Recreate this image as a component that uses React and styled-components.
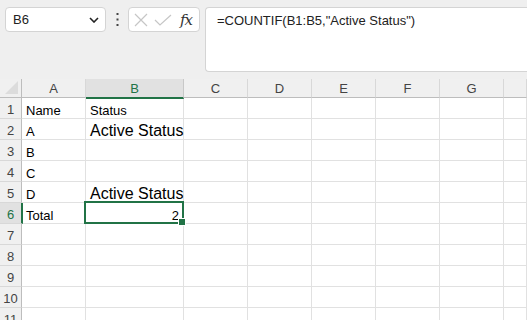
import React from "react";
import styled, { createGlobalStyle } from "styled-components";

const GREEN = "#217346";

const Global = createGlobalStyle`
  html, body { margin: 0; padding: 0; background: #efefef; }
  body { font-family: "Liberation Sans", Arial, sans-serif; }
`;

const Page = styled.div`
  width: 527px;
  height: 320px;
  overflow: hidden;
  background: #efefef;
  display: flex;
  flex-direction: column;
`;

const Toolbar = styled.div`
  display: flex;
  align-items: flex-start;
  padding: 7px 0 0 5px;
  height: 73px;
  box-sizing: border-box;
`;

const NameBox = styled.div`
  width: 101px;
  height: 25px;
  box-sizing: border-box;
  background: #fff;
  border: 1px solid #d4d4d4;
  border-radius: 4px;
  display: flex;
  align-items: center;
  justify-content: space-between;
  padding: 0 6px 0 7px;
  font-size: 13px;
  color: #222;
`;

const Dots = styled.div`
  width: 22px;
  height: 25px;
  display: flex;
  align-items: center;
  justify-content: center;
`;

const FxBox = styled.div`
  width: 72px;
  height: 25px;
  box-sizing: border-box;
  background: #fff;
  border: 1px solid #d4d4d4;
  border-radius: 4px;
  display: flex;
  align-items: center;
  padding: 0 4px 0 5px;
  gap: 6px;
`;

const Fx = styled.span`
  font-family: "DejaVu Serif", "Liberation Serif", serif;
  font-style: italic;
  font-size: 15px;
  color: #333;
  margin-left: 2px;
  letter-spacing: -1px;
`;

const FormulaBox = styled.div`
  flex: 1;
  margin-left: 5px;
  height: 65px;
  box-sizing: border-box;
  background: #fff;
  border: 1px solid #d4d4d4;
  border-right: none;
  border-radius: 4px 0 0 4px;
  padding: 5px 0 0 11px;
  font-size: 13px;
  color: #222;
`;

const Grid = styled.div`
  margin-top: 7px;
  display: grid;
  grid-template-columns: 22px 64px 98px 64px 64px 64px 64px 64px 23px;
  grid-template-rows: 19px repeat(11, 21px);
  background: #fff;
`;

const Corner = styled.div`
  background: #f0f0f0;
  border-right: 1px solid #bdbdbd;
  border-bottom: 1px solid #bdbdbd;
  position: relative;
  &::after {
    content: "";
    position: absolute;
    right: 3px;
    bottom: 3px;
    width: 0;
    height: 0;
    border-left: 13px solid transparent;
    border-bottom: 13px solid #dcdcdc;
  }
`;

const ColHead = styled.div`
  background: ${(p) => (p.$active ? "#e1e1e1" : "#f0f0f0")};
  color: ${(p) => (p.$active ? GREEN : "#444")};
  border-right: 1px solid ${(p) => (p.$active ? "#c8c8c8" : "#d8d8d8")};
  border-bottom: ${(p) => (p.$active ? `2px solid ${GREEN}` : "1px solid #bdbdbd")};
  margin-bottom: ${(p) => (p.$active ? "-1px" : "0")};
  font-size: 13px;
  display: flex;
  align-items: center;
  justify-content: center;
  padding-top: 1px;
  box-sizing: border-box;
  position: relative;
  z-index: 1;
`;

const RowHead = styled.div`
  background: ${(p) => (p.$active ? "#e1e1e1" : "#f0f0f0")};
  color: ${(p) => (p.$active ? GREEN : "#444")};
  border-right: ${(p) => (p.$active ? `2px solid ${GREEN}` : "1px solid #bdbdbd")};
  margin-right: ${(p) => (p.$active ? "-1px" : "0")};
  border-bottom: 1px solid #d8d8d8;
  font-size: 13px;
  display: flex;
  align-items: center;
  justify-content: center;
  padding-top: 2px;
  box-sizing: border-box;
  position: relative;
  z-index: 1;
`;

const Cell = styled.div`
  border-right: 1px solid #e1e1e1;
  border-bottom: 1px solid #e1e1e1;
  box-sizing: border-box;
  display: flex;
  align-items: flex-end;
  justify-content: ${(p) => (p.$right ? "flex-end" : "flex-start")};
  padding: 0 4px 0 4px;
  font-size: ${(p) => (p.$big ? "16px" : "13px")};
  line-height: ${(p) => (p.$big ? "17px" : "15px")};
  color: #000;
  white-space: nowrap;
  position: relative;
`;

const Selection = styled.div`
  position: absolute;
  left: -2px;
  top: -2px;
  right: -1px;
  bottom: -1px;
  border: 2px solid ${GREEN};
  z-index: 2;
  pointer-events: none;
`;

const Handle = styled.div`
  position: absolute;
  right: -4px;
  bottom: -4px;
  width: 6px;
  height: 6px;
  background: ${GREEN};
  border: 1px solid #fff;
  z-index: 3;
`;

const cols = ["A", "B", "C", "D", "E", "F", "G", "H"];
const data = {
  1: { A: "Name", B: "Status" },
  2: { A: "A", B: "Active Status", bigB: true },
  3: { A: "B" },
  4: { A: "C" },
  5: { A: "D", B: "Active Status", bigB: true },
  6: { A: "Total", B: "2", rightB: true },
};

export default function App() {
  const rows = Array.from({ length: 11 }, (_, i) => i + 1);
  return (
    <Page>
      <Global />
      <Toolbar>
        <NameBox>
          <span>B6</span>
          <svg width="10" height="6" viewBox="0 0 10 6">
            <path d="M1 1 L5 5 L9 1" fill="none" stroke="#222" strokeWidth="1.6" />
          </svg>
        </NameBox>
        <Dots>
          <svg width="3" height="13" viewBox="0 0 3 13">
            <rect x="0.5" y="0" width="2" height="2" fill="#444" />
            <rect x="0.5" y="5.5" width="2" height="2" fill="#444" />
            <rect x="0.5" y="11" width="2" height="2" fill="#444" />
          </svg>
        </Dots>
        <FxBox>
          <svg width="14" height="14" viewBox="0 0 14 14">
            <path d="M1 1 L13 13 M13 1 L1 13" stroke="#c6c6c6" strokeWidth="1.2" fill="none" />
          </svg>
          <svg width="18" height="12" viewBox="0 0 18 12">
            <path d="M1 6 L6 11 L17 1" stroke="#c6c6c6" strokeWidth="1.2" fill="none" />
          </svg>
          <Fx>fx</Fx>
        </FxBox>
        <FormulaBox>=COUNTIF(B1:B5,"Active Status")</FormulaBox>
      </Toolbar>
      <Grid>
        <Corner />
        {cols.map((c) => (
          <ColHead key={c} $active={c === "B"}>{c === "H" ? "" : c}</ColHead>
        ))}
        {rows.map((r) => (
          <React.Fragment key={r}>
            <RowHead $active={r === 6}>{r}</RowHead>
            {cols.map((c) => {
              const d = data[r] || {};
              const isB = c === "B";
              return (
                <Cell
                  key={c}
                  $big={isB && d.bigB}
                  $right={isB && d.rightB}
                >
                  {d[c] || ""}
                  {r === 6 && isB && (
                    <Selection>
                      <Handle />
                    </Selection>
                  )}
                </Cell>
              );
            })}
          </React.Fragment>
        ))}
      </Grid>
    </Page>
  );
}
